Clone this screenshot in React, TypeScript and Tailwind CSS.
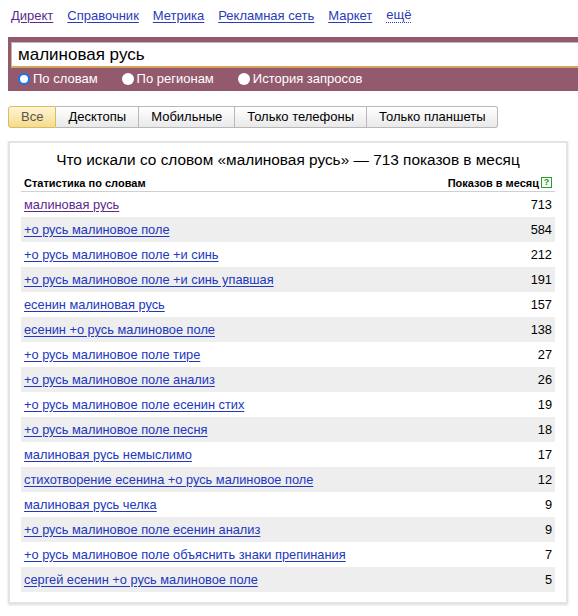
const navLinks = [
  { label: 'Директ', visited: true },
  { label: 'Справочник' },
  { label: 'Метрика' },
  { label: 'Рекламная сеть' },
  { label: 'Маркет' },
];

const tabs = ['Все', 'Десктопы', 'Мобильные', 'Только телефоны', 'Только планшеты'];

const rows: { phrase: string; count: number; visited?: boolean }[] = [
  { phrase: 'малиновая русь', count: 713, visited: true },
  { phrase: '+о русь малиновое поле', count: 584 },
  { phrase: '+о русь малиновое поле +и синь', count: 212 },
  { phrase: '+о русь малиновое поле +и синь упавшая', count: 191 },
  { phrase: 'есенин малиновая русь', count: 157 },
  { phrase: 'есенин +о русь малиновое поле', count: 138 },
  { phrase: '+о русь малиновое поле тире', count: 27 },
  { phrase: '+о русь малиновое поле анализ', count: 26 },
  { phrase: '+о русь малиновое поле есенин стих', count: 19 },
  { phrase: '+о русь малиновое поле песня', count: 18 },
  { phrase: 'малиновая русь немыслимо', count: 17 },
  { phrase: 'стихотворение есенина +о русь малиновое поле', count: 12 },
  { phrase: 'малиновая русь челка', count: 9 },
  { phrase: '+о русь малиновое поле есенин анализ', count: 9 },
  { phrase: '+о русь малиновое поле объяснить знаки препинания', count: 7 },
  { phrase: 'сергей есенин +о русь малиновое поле', count: 5 },
];

function Radio({ label, checked }: { label: string; checked?: boolean }) {
  return (
    <label className="flex items-center gap-[3px] text-white">
      {checked ? (
        <span className="w-[12px] h-[12px] rounded-full border-[2px] border-[#1a73e8] bg-white" />
      ) : (
        <span className="w-[12px] h-[12px] rounded-full bg-white" />
      )}
      <span>{label}</span>
    </label>
  );
}

export default function App() {
  return (
    <div className="min-h-screen bg-white font-['Liberation_Sans',Arial,sans-serif] text-[13px] text-black overflow-hidden">
      {/* Top services */}
      <div className="flex items-center gap-[14px] pl-[11px] h-[31px]">
        {navLinks.map((l) => (
          <a
            key={l.label}
            href="#"
            className={`underline underline-offset-2 ${l.visited ? 'text-[#5b2a8c]' : 'text-[#2a3cb8]'}`}
          >
            {l.label}
          </a>
        ))}
        <span className="text-[#2a3cb8] border-b border-dotted border-[#2a3cb8] leading-[14px]">ещё</span>
      </div>

      {/* Search band */}
      <div className="ml-[8px] mt-[6px] bg-[#935a6e] h-[54px] pt-[5px] pl-[3px]">
        <div className="h-[26px] bg-white border-t border-t-[#b9b9b9] border-l border-l-[#c8b48a] border-b-2 border-b-[#d6a35c] flex items-center pl-[6px] text-[17px] leading-none">
          малиновая русь
        </div>
        <div className="flex items-center gap-[24px] pl-[7px] mt-[3px] h-[16px]">
          <Radio label="По словам" checked />
          <Radio label="По регионам" />
          <Radio label="История запросов" />
        </div>
      </div>

      {/* Device tabs */}
      <div className="flex ml-[8px] mt-[15px] h-[22px]">
        {tabs.map((t, i) => (
          <div
            key={t}
            className={`flex items-center px-[12px] border ${i > 0 ? 'border-l-0' : ''} ${
              i === 0 ? 'rounded-l-[3px]' : ''
            } ${i === tabs.length - 1 ? 'rounded-r-[3px]' : ''} ${
              i === 0
                ? 'bg-gradient-to-b from-[#fff5d2] to-[#f6db8c] border-[#d8bc6a] text-[#555]'
                : 'bg-gradient-to-b from-white to-[#e9e9e9] border-[#b8b8b8] text-black'
            }`}
          >
            {t}
          </div>
        ))}
      </div>

      {/* Stats card */}
      <div className="ml-[8px] mt-[13px] w-[560px] border-2 border-[#e4e4e4] shadow-[0_1px_2px_rgba(0,0,0,0.15)] px-[11px] pb-[10px]">
        <div className="text-center text-[15.4px] leading-[18px] pt-[8px]">
          Что искали со словом «малиновая русь» — 713 показов в месяц
        </div>
        <div className="flex items-end justify-between h-[23px] pb-0 border-b border-[#cfcfd6] px-[3px] text-[11px] font-bold">
          <span>Статистика по словам</span>
          <span className="flex items-center gap-[2px]">
            Показов в месяц
            <span className="w-[11px] h-[11px] border border-[#2f9a2f] bg-[#f4fff4] text-[#2f8a2f] text-[9px] leading-[9px] flex items-center justify-center font-bold">
              ?
            </span>
          </span>
        </div>
        {rows.map((r, i) => (
          <div
            key={i}
            className={`flex items-center justify-between h-[25px] px-[3px] text-[12.8px] ${i % 2 === 1 ? 'bg-[#eeeeee]' : ''}`}
          >
            <a
              href="#"
              className={`underline underline-offset-2 ${r.visited ? 'text-[#5b2a8c]' : 'text-[#2137c0]'}`}
            >
              {r.phrase}
            </a>
            <span>{r.count}</span>
          </div>
        ))}
      </div>
    </div>
  );
}
